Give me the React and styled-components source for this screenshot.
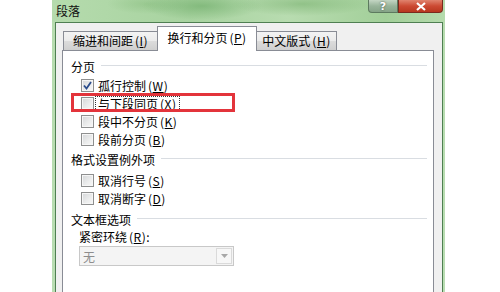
import React from "react";
import styled, { createGlobalStyle } from "styled-components";

const Global = createGlobalStyle`
  html, body { margin: 0; padding: 0; background: #fff; }
  body { font-family: "Noto Sans CJK SC", "Noto Sans", sans-serif; font-size: 12px; color: #000; }
`;

const Stage = styled.div`
  width: 500px;
  height: 292px;
  overflow: hidden;
  background: #fff;
  padding-left: 52px;
  box-sizing: border-box;
`;

const Window = styled.div`
  width: 393px;
  height: 300px;
  display: flex;
  flex-direction: column;
  background: linear-gradient(180deg, #b7dcaf 0%, #b9ddb2 100%);
  box-sizing: border-box;
`;

const TitleBar = styled.div`
  height: 22px;
  flex: none;
  display: flex;
  align-items: flex-start;
  padding: 0 2px 0 4px;
  background:
    radial-gradient(ellipse 60px 14px at 150px 6px, rgba(100,165,95,0.55), rgba(100,165,95,0)),
    radial-gradient(ellipse 70px 12px at 250px 4px, rgba(110,170,100,0.5), rgba(110,170,100,0)),
    radial-gradient(ellipse 40px 10px at 95px 4px, rgba(130,185,120,0.45), rgba(130,185,120,0)),
    linear-gradient(90deg, #b5dbad 0%, #a8d3a0 35%, #b8dcb0 60%, #a2cf99 85%, #b5dbad 100%);
`;

const Title = styled.span`
  margin-top: 3px;
  font-size: 12px;
  line-height: 16px;
  color: #111;
`;

const CaptionButtons = styled.div`
  margin-left: auto;
  display: flex;
`;

const CapButton = styled.div`
  height: 13px;
  width: ${p => p.$w}px;
  display: flex;
  align-items: center;
  justify-content: center;
  box-sizing: border-box;
  border: 1px solid ${p => (p.$close ? "#7a2a1e" : "#5d7a5f")};
  border-top: none;
  border-radius: ${p => (p.$close ? "0 0 4px 0" : "0 0 0 4px")};
  background: ${p =>
    p.$close
      ? "linear-gradient(180deg, #e0836e 0%, #cc4a33 50%, #b8371f 100%)"
      : "linear-gradient(180deg, #c4d6c4 0%, #98b49a 50%, #86a488 100%)"};
  color: #fff;
  font-family: "DejaVu Sans", sans-serif;
  font-weight: bold;
  font-size: 11px;
  line-height: 11px;
  text-shadow: 0 0 2px #3a4a3a;
`;

const Client = styled.div`
  flex: 1;
  margin: 0 2px 0 3px;
  border: 1px solid #4f7f52;
  border-bottom: none;
  background: #f0f0f0;
  padding: 3px 8px 0 6px;
  display: flex;
  flex-direction: column;
`;

const TabStrip = styled.div`
  height: 24px;
  display: flex;
  align-items: flex-end;
  padding-left: 1px;
  position: relative;
  z-index: 1;
`;

const Tab = styled.div`
  width: ${p => p.$w}px;
  height: ${p => (p.$active ? 25 : 19)}px;
  margin-bottom: ${p => (p.$active ? -1 : 0)}px;
  margin-left: ${p => (p.$active ? -1 : 0)}px;
  margin-right: ${p => (p.$active ? -1 : 0)}px;
  position: relative;
  z-index: ${p => (p.$active ? 2 : 1)};
  box-sizing: border-box;
  border: 1px solid #898c95;
  border-bottom: none;
  background: ${p => (p.$active ? "#fff" : "linear-gradient(180deg, #f3f3f3 0%, #ebebeb 50%, #dcdcdc 51%, #cfcfcf 100%)")};
  display: flex;
  align-items: center;
  justify-content: center;
  padding-bottom: ${p => (p.$active ? 3 : 0)}px;
  font-size: 12px;
  line-height: 14px;
  white-space: nowrap;
  color: #000;
`;

const Panel = styled.div`
  flex: 1;
  background: #fff;
  border: 1px solid #898c95;
  border-bottom: none;
  padding: 7px 0 0 8px;
  display: flex;
  flex-direction: column;
`;

const SectionHead = styled.div`
  height: 18px;
  display: flex;
  align-items: center;
  margin-top: ${p => p.$mt || 0}px;
  font-size: 12px;
  line-height: 14px;
`;

const Rule = styled.div`
  flex: 1;
  height: 1px;
  background: #d9dde2;
  margin: -3px 6px 0 6px;
`;

const Row = styled.div`
  height: 18px;
  display: flex;
  align-items: center;
  padding-left: 10px;
  margin-top: ${p => p.$mt || 0}px;
  position: relative;
`;

const Box = styled.div`
  width: 13px;
  height: 13px;
  box-sizing: border-box;
  border: 1px solid #8e8f8f;
  background: linear-gradient(135deg, #d4d6d8 0%, #eceded 60%, #f8f8f8 100%);
  box-shadow: inset 0 0 0 1px #f6f6f6;
  display: flex;
  align-items: center;
  justify-content: center;
  flex: none;
`;

const Label = styled.span`
  margin-left: 1px;
  padding: 0 2px;
  line-height: 13px;
  border: 1px ${p => (p.$focus ? "dotted #333" : "solid transparent")};
  font-size: 12px;
  white-space: nowrap;
`;

const Mnemonic = styled.span`
  margin-left: 2px;
  letter-spacing: 0.5px;
`;

const Annot = styled.div`
  position: absolute;
  left: 0;
  top: -1px;
  width: 164px;
  height: 19px;
  border: 3px solid #e3343b;
  box-sizing: border-box;
  pointer-events: none;
`;

const FieldLabel = styled.div`
  height: 16px;
  display: flex;
  align-items: center;
  padding-left: 8px;
  font-size: 12px;
  line-height: 14px;
`;

const Combo = styled.div`
  margin: 1px 0 0 8px;
  width: 155px;
  height: 20px;
  box-sizing: border-box;
  border: 1px solid #c8c8c8;
  background: #f4f4f4;
  display: flex;
  align-items: center;
  color: #8d8d8d;
  font-size: 12px;
  padding-left: 3px;
`;

const ComboButton = styled.div`
  margin-left: auto;
  width: 16px;
  height: 16px;
  margin-right: 1px;
  box-sizing: border-box;
  border: 1px solid #dadada;
  background: #f7f7f7;
  display: flex;
  align-items: center;
  justify-content: center;
`;

const Mn = ({ k }) => (
  <Mnemonic>(<u>{k}</u>)</Mnemonic>
);

const Check = ({ checked }) => (
  <Box>
    {checked && (
      <svg width="9" height="9" viewBox="0 0 9 9">
        <path d="M1 4.5 L3.5 7.5 L8 1" fill="none" stroke="#2a4c8c" strokeWidth="1.8" />
      </svg>
    )}
  </Box>
);

const CheckRow = ({ checked, focus, text, k, mt, children }) => (
  <Row $mt={mt}>
    {children}
    <Check checked={checked} />
    <Label $focus={focus}>
      {text}
      <Mn k={k} />
    </Label>
  </Row>
);

export default function App() {
  return (
    <>
      <Global />
      <Stage>
        <Window>
          <TitleBar>
            <Title>段落</Title>
            <CaptionButtons>
              <CapButton $w={30}>?</CapButton>
              <CapButton $w={45} $close>
                <svg width="12" height="9" viewBox="0 0 12 9">
                  <path d="M2 1 L10 8 M10 1 L2 8" stroke="#fff" strokeWidth="2.2" />
                </svg>
              </CapButton>
            </CaptionButtons>
          </TitleBar>
          <Client>
            <TabStrip>
              <Tab $w={95}>缩进和间距<Mn k="I" /></Tab>
              <Tab $w={100} $active>换行和分页<Mn k="P" /></Tab>
              <Tab $w={81}>中文版式<Mn k="H" /></Tab>
            </TabStrip>
            <Panel>
              <SectionHead>
                分页
                <Rule />
              </SectionHead>
              <CheckRow checked text="孤行控制" k="W" />
              <CheckRow focus text="与下段同页" k="X">
                <Annot />
              </CheckRow>
              <CheckRow text="段中不分页" k="K" />
              <CheckRow text="段前分页" k="B" />
              <SectionHead $mt={3}>
                格式设置例外项
                <Rule />
              </SectionHead>
              <CheckRow mt={2} text="取消行号" k="S" />
              <CheckRow text="取消断字" k="D" />
              <SectionHead $mt={4}>
                文本框选项
                <Rule />
              </SectionHead>
              <FieldLabel>
                紧密环绕<Mn k="R" />:
              </FieldLabel>
              <Combo>
                无
                <ComboButton>
                  <svg width="7" height="4" viewBox="0 0 7 4">
                    <path d="M0 0 L7 0 L3.5 4 Z" fill="#a8a8a8" />
                  </svg>
                </ComboButton>
              </Combo>
            </Panel>
          </Client>
        </Window>
      </Stage>
    </>
  );
}
